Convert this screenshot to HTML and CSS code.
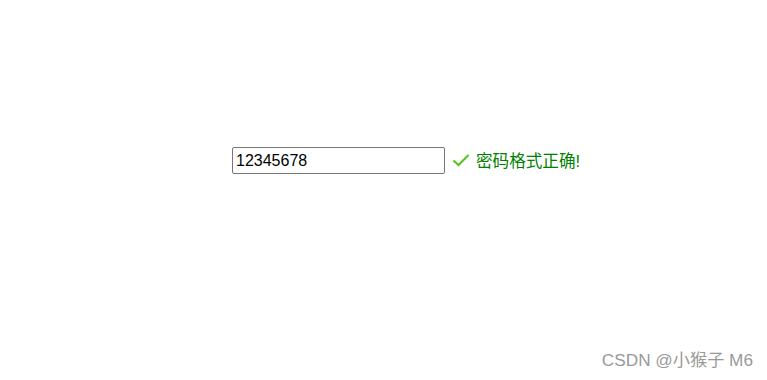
FILE: index.html
```html
<!DOCTYPE html>
<html lang="zh">
<head>
    <meta charset="UTF-8">
    <title>密码校验</title>
    <link rel="stylesheet" href="styles.css">
</head>
<body>
    <div class="form-row">
        <input type="text" class="pwd-input" value="12345678">
        <span class="tip ok">
            <svg class="tip-icon" width="18" height="14" viewBox="0 0 18 14">
                <path d="M1.5 7.5 L6.5 12 L16.5 2" fill="none" stroke="#52c41a" stroke-width="2"/>
            </svg>
            密码格式正确!
        </span>
    </div>
    <div class="watermark">CSDN @小猴子 M6</div>
</body>
</html>
```
FILE: styles.css
```css
body {
    margin: 0;
    width: 767px;
    height: 380px;
    font-family: Arial, "Liberation Sans", "Noto Sans CJK SC", sans-serif;
    background: #fff;
    position: relative;
}
.form-row {
    display: flex;
    align-items: center;
    padding-top: 147px;
    padding-left: 232px;
}
.pwd-input {
    box-sizing: border-box;
    width: 213px;
    height: 27px;
    border: 1px solid #767676;
    border-radius: 2px;
    padding: 0 3px;
    font-family: Arial, "Liberation Sans", sans-serif;
    font-size: 16px;
    color: #000;
    margin: 0;
}
.tip {
    display: flex;
    align-items: center;
    margin-left: 7px;
    margin-top: -2px;
    font-size: 16.6px;
}
.tip.ok {
    color: #008000;
}
.tip-icon {
    margin-right: 6px;
    margin-top: 1px;
}
.watermark {
    position: absolute;
    right: 14px;
    bottom: 9px;
    color: #999;
    font-size: 17.2px;
}
```
